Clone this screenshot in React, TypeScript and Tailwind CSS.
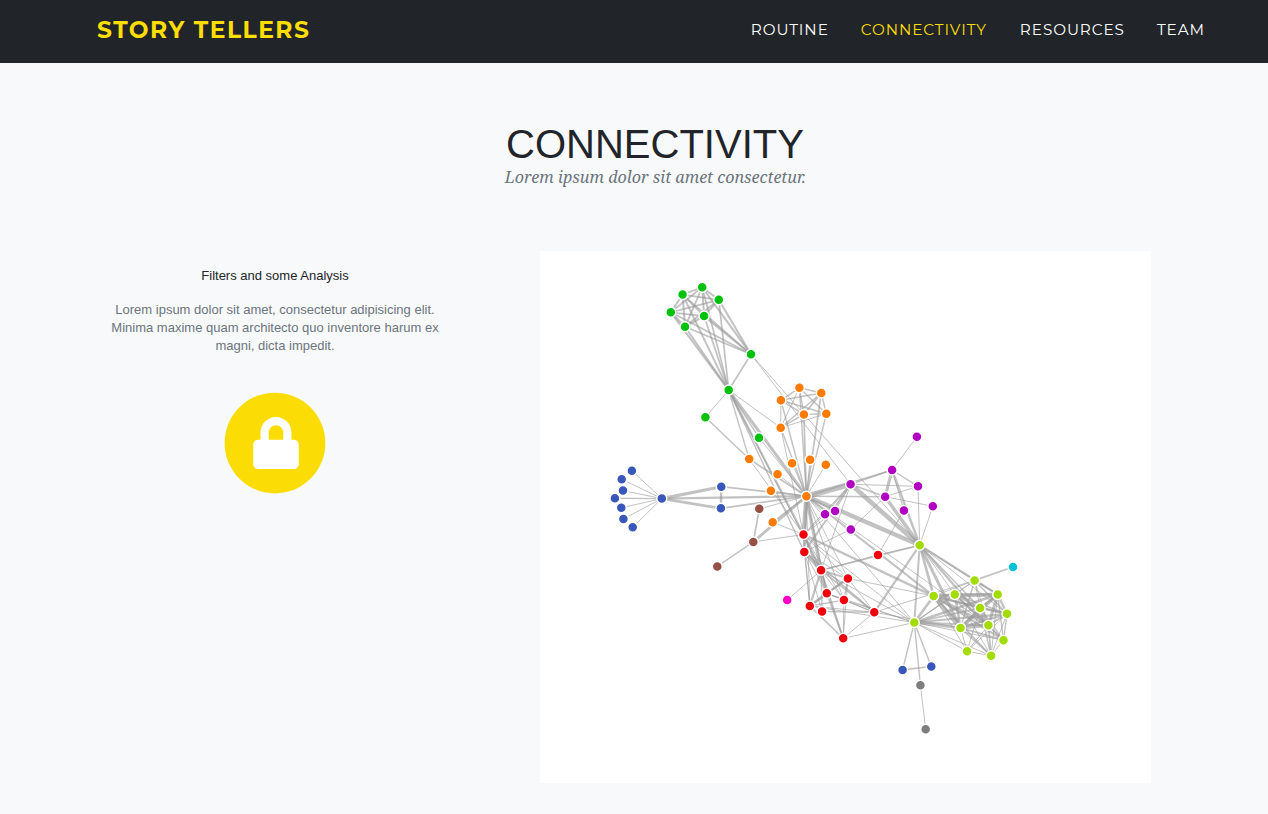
import React from "react";
import { FaCircle, FaLock } from "react-icons/fa";

type Node = [id: number, x: number, y: number, color: string];

const BLUE = "#3957ba";
const ORANGE = "#ff7b00";
const GREEN = "#00c20d";
const RED = "#f0000c";
const PURPLE = "#b100c2";
const BROWN = "#975046";
const PINK = "#ff00c8";
const GREY = "#7d7d7d";
const LIME = "#a2dc00";
const CYAN = "#00c0d8";

const nodes: Node[] = [
  [0, 661.8, 498.6, BLUE], [1, 631.9, 470.7, BLUE], [2, 720.9, 508.3, BLUE], [3, 721.3, 486.7, BLUE],
  [4, 621.7, 479.2, BLUE], [5, 623, 490.6, BLUE], [6, 621.3, 507.8, BLUE], [7, 623.4, 518.9, BLUE],
  [8, 614.9, 498.2, BLUE], [9, 632.7, 527.3, BLUE],
  [10, 792.1, 463.2, ORANGE], [11, 806.4, 496.2, ORANGE], [12, 759, 437.7, GREEN], [13, 825.8, 464.7, ORANGE],
  [14, 777.5, 474.3, ORANGE], [15, 770.9, 490.7, ORANGE],
  [16, 751, 354.3, GREEN], [17, 702.2, 287.3, GREEN], [18, 718.8, 299.8, GREEN], [19, 704.1, 316.1, GREEN],
  [20, 685, 326.8, GREEN], [21, 670.8, 312.3, GREEN], [22, 682.6, 294.6, GREEN], [23, 728.7, 390.1, GREEN],
  [24, 804.3, 551.9, RED], [25, 821.1, 570.3, RED], [26, 850.6, 484.3, PURPLE], [27, 803.5, 534.5, RED],
  [28, 753.3, 541.9, BROWN], [29, 780.7, 427.7, ORANGE], [30, 705.4, 417.3, GREEN], [31, 749.2, 459.1, ORANGE],
  [32, 810.1, 459.8, ORANGE], [33, 772.7, 522.2, ORANGE], [34, 803.9, 414.4, ORANGE], [35, 821.3, 393, ORANGE],
  [36, 780.9, 400.3, ORANGE], [37, 799.4, 387.8, ORANGE], [38, 826.3, 413.8, ORANGE],
  [39, 878, 554.9, RED], [40, 787.2, 600, PINK], [41, 874.3, 612.3, RED], [42, 822.1, 611.6, RED],
  [43, 835.1, 510.9, PURPLE], [44, 759.3, 508.8, BROWN], [45, 717.3, 566.4, BROWN], [46, 925.7, 729.2, GREY],
  [47, 920.4, 685.3, GREY], [48, 914.3, 622.5, LIME], [49, 885.2, 496.7, PURPLE], [50, 850.8, 529.4, PURPLE],
  [51, 892.1, 470, PURPLE], [52, 903.9, 510.5, PURPLE], [53, 916.9, 436.8, PURPLE], [54, 918, 486.3, PURPLE],
  [55, 919.7, 545.2, LIME], [56, 932.8, 506.3, PURPLE], [57, 974.6, 580.4, LIME], [58, 933.7, 596.1, LIME],
  [59, 997.7, 594.5, LIME], [60, 1003.5, 640.2, LIME], [61, 954.8, 594.5, LIME], [62, 960.5, 627.9, LIME],
  [63, 1007, 613.8, LIME], [64, 988.4, 625.3, LIME], [65, 980.1, 608, LIME], [66, 991.1, 655.8, LIME],
  [67, 1013, 567, CYAN], [68, 809.8, 606, RED], [69, 826.8, 593.3, RED], [70, 847.9, 578.4, RED],
  [71, 843.9, 600.1, RED], [72, 825, 514.3, PURPLE], [73, 902.6, 669.9, BLUE], [74, 931.3, 666.5, BLUE],
  [75, 843.2, 638.3, RED], [76, 967.1, 651.2, LIME],
];

// Each row: source id, then target:weight pairs.
const linkTable = `
1 0:1
2 0:8
3 0:10 2:6
4 0:1
5 0:1
6 0:1
7 0:1
8 0:2
9 0:1
11 10:1 3:3 2:3 0:5
12 11:1
13 11:1
14 11:1
15 11:1
17 16:4
18 16:4 17:4
19 16:4 17:4 18:4
20 16:3 17:3 18:3 19:4
21 16:3 17:3 18:3 19:3 20:5
22 16:3 17:3 18:3 19:3 20:4 21:4
23 16:3 17:3 18:3 19:3 20:4 21:4 22:4 12:2 11:9
24 23:2 11:7
25 24:13 23:1 11:12
26 24:4 11:31 16:1 25:1
27 11:17 23:5 25:5 24:1 26:1
28 11:8 27:1
29 23:1 27:1 11:2
30 23:1
31 30:2 11:3 23:2 27:1
32 11:1
33 11:2 27:1
34 11:3 29:2
35 11:3 34:3 29:2
36 34:2 35:2 11:2 29:1
37 34:2 35:2 36:2 11:2 29:1
38 34:2 35:2 36:2 37:2 11:2 29:1
39 25:1
40 25:1
41 24:2 25:3
42 41:2 25:2 24:1
43 11:3 26:1 27:1
44 28:3 11:1
45 28:2
47 46:1
48 47:2 25:1 27:1 11:1
49 26:3 11:2
50 49:1 24:1
51 49:9 26:2 11:2
52 51:1 39:1
53 51:1
54 51:2 49:1 26:1
55 51:6 49:12 39:1 54:1 26:21 11:19 16:1 25:2 41:5 48:4
56 49:1 55:1
57 55:1 41:1 48:1
58 55:7 48:7 27:6 57:1 11:4
59 58:15 55:5 48:6 57:2
60 48:1 58:4 59:2
61 48:2 58:6 60:2 59:5 57:1 55:1
62 55:9 58:17 59:13 48:7 57:2 41:1 61:6 60:3
63 59:5 48:5 62:6 57:2 58:4 61:3 60:2 55:1
64 55:5 62:12 48:5 63:4 58:10 61:6 60:2 59:9 57:1 11:1
65 63:5 64:7 48:3 62:5 58:5 61:5 60:2 59:5 57:1 55:2
66 64:3 58:3 59:1 62:2 65:2 48:1 63:1 61:1 60:1
67 57:3
68 25:5 11:1 24:1 27:1 48:1 41:1
69 25:6 68:6 11:1 24:1 27:2 48:1 41:1
70 25:4 69:4 68:4 11:1 24:1 27:1 41:1 58:1
71 27:1 69:2 68:2 70:2 11:1 48:1 41:1 25:1
72 26:2 27:1 11:1
73 48:2
74 48:2 73:3
75 69:3 68:3 25:3 48:1 41:1 70:1 71:1
76 64:1 65:1 66:1 63:1 62:1 48:1 58:1
`;

const links = linkTable
  .trim()
  .split("\n")
  .flatMap((row) => {
    const [source, ...targets] = row.split(" ");
    return targets.map((entry) => {
      const [target, value] = entry.split(":").map(Number);
      return { source: Number(source), target, value };
    });
  });

function Network() {
  return (
    <svg className="block h-[532px] w-[611px] bg-white" viewBox="540 251 611 532">
      <g stroke="#999" strokeOpacity={0.6}>
        {links.map(({ source, target, value }) => (
          <line
            key={`${source}-${target}`}
            x1={nodes[source][1]}
            y1={nodes[source][2]}
            x2={nodes[target][1]}
            y2={nodes[target][2]}
            strokeWidth={Math.sqrt(value)}
          />
        ))}
      </g>
      <g stroke="#fff" strokeWidth={1.5}>
        {nodes.map(([id, x, y, color]) => (
          <circle key={id} cx={x} cy={y} r={5} fill={color} />
        ))}
      </g>
    </svg>
  );
}

const navItems = ["Routine", "Connectivity", "Resources", "Team"];

export default function App() {
  return (
    <div className="h-[814px] overflow-hidden bg-[#f8f9fb] font-['Liberation_Sans',Arial,sans-serif] text-[#212529]">
      <nav className="flex h-[63px] items-center justify-between bg-[#212529] pr-[63px] pb-1 pl-[97px] font-['Montserrat','Noto_Sans',sans-serif] uppercase">
        <a className="origin-left scale-x-[0.975] text-[24px] leading-6 font-bold tracking-[0.0625em] text-[#fedd00]">
          Story Tellers
        </a>
        <ul className="flex gap-8 text-[15.2px] leading-6 tracking-[0.0625em] text-white">
          {navItems.map((item) => (
            <li key={item} className={item === "Connectivity" ? "pr-px text-[#fedd00]" : ""}>
              {item}
            </li>
          ))}
        </ul>
      </nav>
      <header className="ml-[97px] flex w-[1116px] flex-col items-center pt-[57px]">
        <h2 className="text-[40px] leading-[48px] uppercase">Connectivity</h2>
        <h3 className="scale-x-[0.951] font-['Droid_Serif','Noto_Serif','DejaVu_Serif',serif] text-[17px] leading-[17px] whitespace-nowrap text-[#6c757d] italic">
          Lorem ipsum dolor sit amet consectetur.
        </h3>
      </header>
      <main className="mt-[66px] flex">
        <section className="ml-[97px] flex w-[356px] flex-col items-center pt-4 text-center text-[13px]">
          <h4 className="leading-[18px]">Filters and some Analysis</h4>
          <p className="mt-4 w-[332px] leading-[18px] text-[#6c757d]">
            Lorem ipsum dolor sit amet, consectetur adipisicing elit. Minima maxime quam architecto quo inventore harum ex
            magni, dicta impedit.
          </p>
          <div className="mt-[36px] grid size-[104px] place-items-center">
            <FaCircle className="col-start-1 row-start-1 size-[104px] text-[#fbdd05]" />
            <FaLock className="col-start-1 row-start-1 ml-px size-[52px] text-white" />
          </div>
        </section>
        <div className="ml-[87px]">
          <Network />
        </div>
      </main>
    </div>
  );
}
